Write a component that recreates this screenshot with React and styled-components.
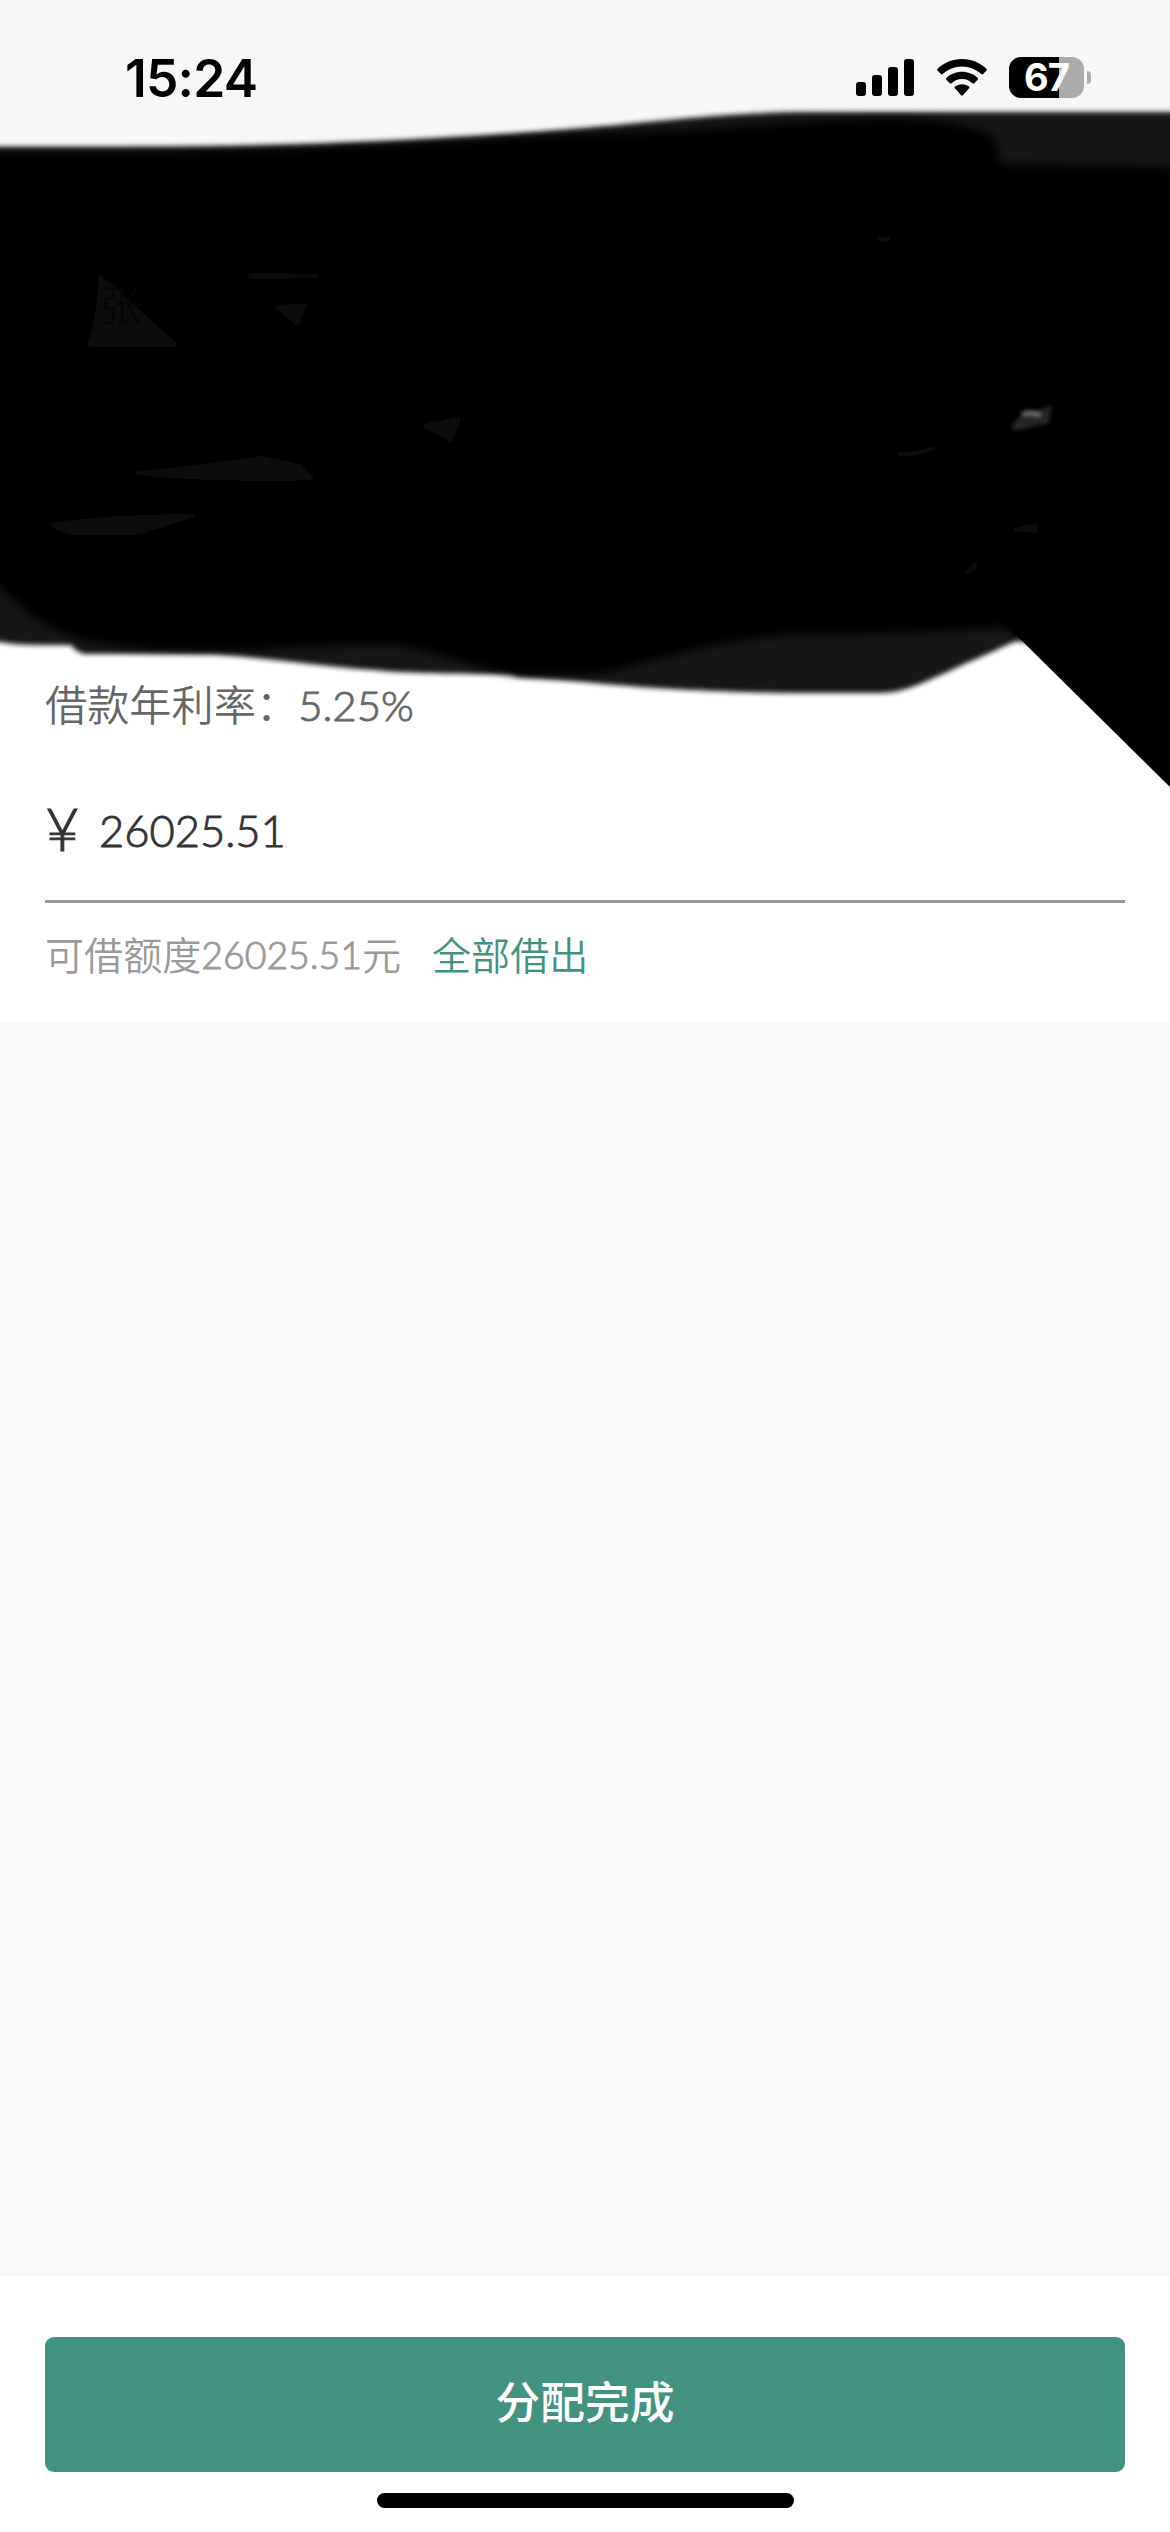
import React from "react";
import styled, { createGlobalStyle } from "styled-components";

const GlobalStyle = createGlobalStyle`
  * {
    box-sizing: border-box;
  }

  body {
    margin: 0;
    background: #f7f8fa;
    font-family: Lato, "Noto Sans CJK SC", sans-serif;
  }
`;

const Screen = styled.div`
  position: relative;
  display: flex;
  flex-direction: column;
  width: 1170px;
  height: 2532px;
  overflow: hidden;
`;

const StatusBar = styled.header`
  display: flex;
  justify-content: space-between;
  height: 156px;
  padding: 58px 79px 0 125px;
  background: #f7f7f7;
`;

const Time = styled.span`
  font: 600 51.5px/41px Inter, sans-serif;
  letter-spacing: -0.8px;
  color: #000;
`;

const StatusIcons = styled.div`
  display: flex;
  align-items: flex-start;
  height: 41px;
  margin-top: -1px;
`;

const Signal = styled.svg`
  margin-right: 22px;
`;

const Wifi = styled.svg`
  margin-right: 22px;
`;

const Battery = styled.div`
  display: flex;
  align-items: center;
  justify-content: center;
  width: 75px;
  height: 41px;
  border-radius: 12px;
  background: linear-gradient(to right, #000 ${props => props.$level}%, #ababab ${props => props.$level}%);
  color: #fff;
  font: 700 38px/41px Inter, sans-serif;
  letter-spacing: -1px;
`;

const BatteryTip = styled.div`
  width: 4px;
  height: 13px;
  margin: 14px 0 0 3px;
  border-radius: 0 4px 4px 0;
  background: #ababab;
`;

const LoanCard = styled.section`
  display: flex;
  flex-direction: column;
  height: 867px;
  padding: 518px 45px 0;
  background: #fff;
`;

const Rate = styled.div`
  display: flex;
  height: 62px;
  line-height: 62px;
  font-size: 42.2px;
  font-weight: 350;
  color: #666;
`;

const Digits = styled.span`
  font-size: ${props => props.$size}px;
  font-weight: 300;
  -webkit-text-stroke: 0.9px currentColor;
`;

const Amount = styled.div`
  display: flex;
  align-items: center;
  height: 100px;
  margin-top: 44px;
  color: #333;
  line-height: 100px;
`;

const Currency = styled.span`
  width: 54px;
  margin-top: -4px;
  font-size: 60px;
  font-weight: 300;
  -webkit-text-stroke: 1px currentColor;
`;

const Rule = styled.hr`
  width: 100%;
  height: 3px;
  margin: 20px 0 0;
  border: 0;
  background: #999;
`;

const Quota = styled.div`
  display: flex;
  height: 60px;
  margin-top: 22px;
  line-height: 60px;
  font-size: 39.1px;
  font-weight: 350;
  color: #999;
`;

const LendAll = styled.a`
  margin-left: 31px;
  color: #429282;
`;

const Footer = styled.footer`
  display: flex;
  flex-direction: column;
  align-items: center;
  height: 256px;
  margin-top: auto;
  padding: 61px 45px 0;
  background: #fff;
`;

const SubmitButton = styled.button`
  width: 100%;
  height: 135px;
  padding: 0 0 10px;
  border: 0;
  border-radius: 9px;
  background: #429282;
  color: #fff;
  font: 500 44.7px/125px "Noto Sans CJK SC", sans-serif;
`;

const HomeIndicator = styled.div`
  width: 417px;
  height: 15px;
  margin-top: 21px;
  border-radius: 8px;
  background: #000;
`;

const Marker = styled.svg`
  position: absolute;
  top: 0;
  left: 0;
`;

const FaintText = styled.text`
  font: 350 42px "Noto Sans CJK SC", sans-serif;
  fill: #060606;
`;

const SignalIcon = () => (
  <Signal width="59" height="41" viewBox="0 0 59 41">
    <rect x="0" y="25" width="10" height="14" rx="3" />
    <rect x="16" y="18" width="10" height="21" rx="3" />
    <rect x="32" y="10" width="10" height="29" rx="3" />
    <rect x="48" y="2" width="10" height="37" rx="3" />
  </Signal>
);

const WifiIcon = () => (
  <Wifi width="50" height="41" viewBox="0 0 50 41">
    <path d="M25 2C15.600 2 7 5.700.600 11.700Q-.300 12.600.500 13.500L3.900 17Q4.800 17.900 5.700 17C10.800 12.300 17.500 9.400 25 9.400S39.200 12.300 44.300 17Q45.200 17.900 46.100 17L49.500 13.500Q50.300 12.600 49.400 11.700C43 5.700 34.400 2 25 2Z" />
    <path d="M25 14.700C19 14.700 13.500 17 9.300 20.900Q8.400 21.800 9.300 22.700L12.800 26.200Q13.700 27 14.600 26.200C17.400 23.700 21 22.100 25 22.100S32.600 23.700 35.400 26.200Q36.300 27 37.200 26.200L40.700 22.700Q41.600 21.800 40.700 20.900C36.500 17 31 14.700 25 14.700Z" />
    <path d="M25 27.200C22.300 27.200 19.900 28.100 17.900 29.600Q17 30.400 17.900 31.300L24.100 38.200Q25 39.100 25.900 38.200L32.100 31.300Q33 30.400 32.100 29.600C30.100 28.100 27.700 27.200 25 27.200Z" />
  </Wifi>
);

// Thin spots left between the marker strokes
const GAPS = [
  "M98 272L181 347H87Q99 310 98 272Z",
  "M246 273L318 274V278L250 279Z",
  "M272 305L308 304L298 327Z",
  "M120 473C180 468 230 460 262 456L300 464L317 480C240 482 180 480 120 473Z",
  "M48 524C90 516 150 514 210 514C170 522 150 534 130 535H75Q60 534 48 524Z",
  "M420 425L462 416L452 443Z",
  "M892 453Q925 452 948 441Q928 458 895 456Z",
  "M870 239L895 235L886 243Z",
  "M1003 533Q1020 525 1038 523V534Q1020 530 1003 533Z",
  "M960 576L978 559L976 570Z"
];

const Scribble = () => (
  <Marker width="1170" height="800" viewBox="0 0 1170 800">
    <defs>
      <filter id="soft" x="-5%" y="-5%" width="110%" height="110%">
        <feGaussianBlur stdDeviation="2.5" />
      </filter>
      <filter id="softer" x="-5%" y="-5%" width="110%" height="110%">
        <feGaussianBlur stdDeviation="4" />
      </filter>
      <filter id="smudge" x="-10%" y="-50%" width="120%" height="200%">
        <feGaussianBlur stdDeviation="2" />
      </filter>
    </defs>
    <path
      filter="url(#soft)"
      fill="#131313"
      d="M-20 147H120C300 147 440 140 585 128C690 118 740 112 815 112H1190V640H1018C995 651 970 661 945 673C920 684 902 693 880 693H790C700 692 620 686 585 682L520 677L510 674C450 674 400 673 373 670C310 665 250 656 210 654H85Q77 653 71 645H40Q15 645 0 642H-20Z"
    />
    <path
      filter="url(#softer)"
      d="M-20 152H150C320 150 440 142 585 134C720 132 800 120 880 119C940 118 960 125 985 132Q998 137 999 164L1190 168V640H1020L1005 627C940 632 870 634 800 634C740 637 690 650 640 663Q600 676 570 674L518 675C480 670 435 650 395 645C320 643 240 653 170 650C110 646 70 640 45 624C20 609 5 590-20 570Z"
    />
    <path d="M1004 622L1018 637L1170 787V600Z" />
    <g filter="url(#smudge)" fill="#111">
      {GAPS.map(d => (
        <path key={d} d={d} />
      ))}
      <path fill="#262626" d="M1011 427Q1022 411 1034 412L1052 405L1049 423L1015 431Z" />
      <path fill="none" stroke="#8a8a8a" strokeWidth="3" d="M1022 414Q1031 410 1040 415" />
    </g>
    <FaintText x="100" y="321">
      张
    </FaintText>
  </Marker>
);

const App = () => (
  <Screen>
    <GlobalStyle />
    <StatusBar>
      <Time>15:24</Time>
      <StatusIcons>
        <SignalIcon />
        <WifiIcon />
        <Battery $level={67}>67</Battery>
        <BatteryTip />
      </StatusIcons>
    </StatusBar>
    <LoanCard>
      <Rate>
        借款年利率：<Digits $size={42}>5.25%</Digits>
      </Rate>
      <Amount>
        <Currency>¥</Currency>
        <Digits $size={43.5}>26025.51</Digits>
      </Amount>
      <Rule />
      <Quota>
        可借额度<Digits $size={37.4}>26025.51</Digits>元<LendAll>全部借出</LendAll>
      </Quota>
    </LoanCard>
    <Footer>
      <SubmitButton>分配完成</SubmitButton>
      <HomeIndicator />
    </Footer>
    <Scribble />
  </Screen>
);

export default App;
